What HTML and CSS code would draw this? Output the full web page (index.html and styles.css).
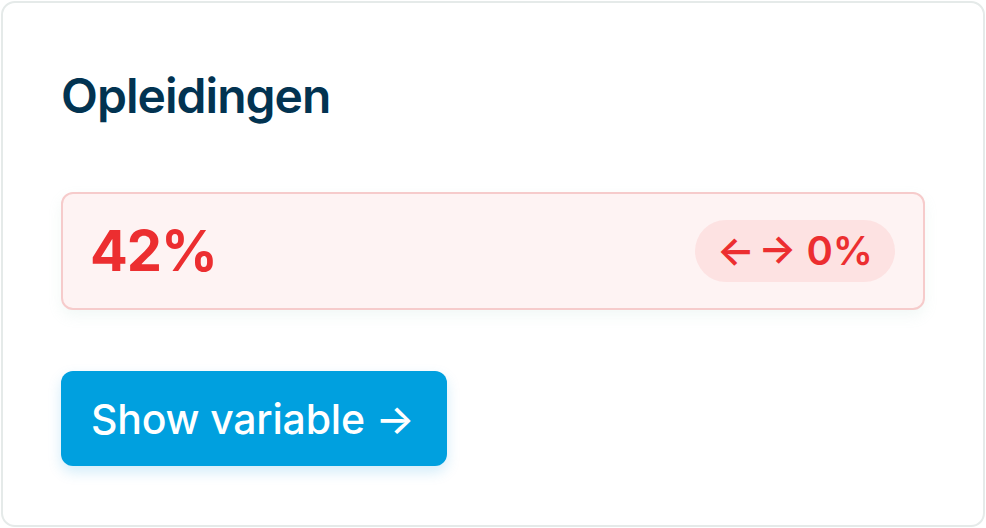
FILE: index.html
```html
<!DOCTYPE html>
<html lang="nl">
<head>
<meta charset="utf-8">
<title>Opleidingen</title>
<link rel="stylesheet" href="styles.css">
</head>
<body>
<div class="card">
  <h2 class="title">Opleidingen</h2>
  <div class="stat">
    <span class="value">42%</span>
    <span class="badge">←&#8202;→ 0%</span>
  </div>
  <div class="actions">
    <a class="btn" href="#">Show variable →</a>
  </div>
</div>
</body>
</html>
```
FILE: styles.css
```css
* { box-sizing: border-box; }
html, body { margin: 0; padding: 0; background: #ffffff; }
body {
  font-family: Inter, "Noto Sans", sans-serif;
  padding: 1px;
}
.card {
  width: 984px;
  height: 526px;
  border: 2px solid #e5eae9;
  border-radius: 14px;
  background: #ffffff;
  padding: 64px 58px 0 58px;
}
.title {
  margin: 0;
  font-size: 48px;
  line-height: 58px;
  font-weight: 600;
  color: #023351;
  letter-spacing: -0.02em;
}
.stat {
  margin-top: 67px;
  height: 118px;
  border: 2px solid #f6cbcb;
  background: #fef3f3;
  border-radius: 12px;
  display: flex;
  align-items: center;
  justify-content: space-between;
  padding: 0 28px 0 27px;
  box-shadow: 0 6px 14px rgba(150, 200, 180, 0.12);
}
.value {
  font-size: 56px;
  font-weight: 700;
  color: #ec2e30;
  line-height: 1;
  letter-spacing: -0.02em;
}
.badge {
  height: 62px;
  border-radius: 31px;
  background: #fde2e2;
  color: #ec2e30;
  font-size: 40px;
  font-weight: 600;
  display: flex;
  align-items: center;
  padding: 0 22px;
  line-height: 1;
  white-space: nowrap;
}
.actions {
  margin-top: 61px;
  display: flex;
}
.btn {
  height: 95px;
  width: 386px;
  border-radius: 12px;
  background: #00a0df;
  color: #ffffff;
  text-decoration: none;
  font-size: 41px;
  font-weight: 500;
  display: flex;
  align-items: center;
  padding: 0 28px 0 30px;
  box-shadow: 0 6px 14px rgba(0, 150, 220, 0.18);
  letter-spacing: -0.005em;
  white-space: nowrap;
}
```
